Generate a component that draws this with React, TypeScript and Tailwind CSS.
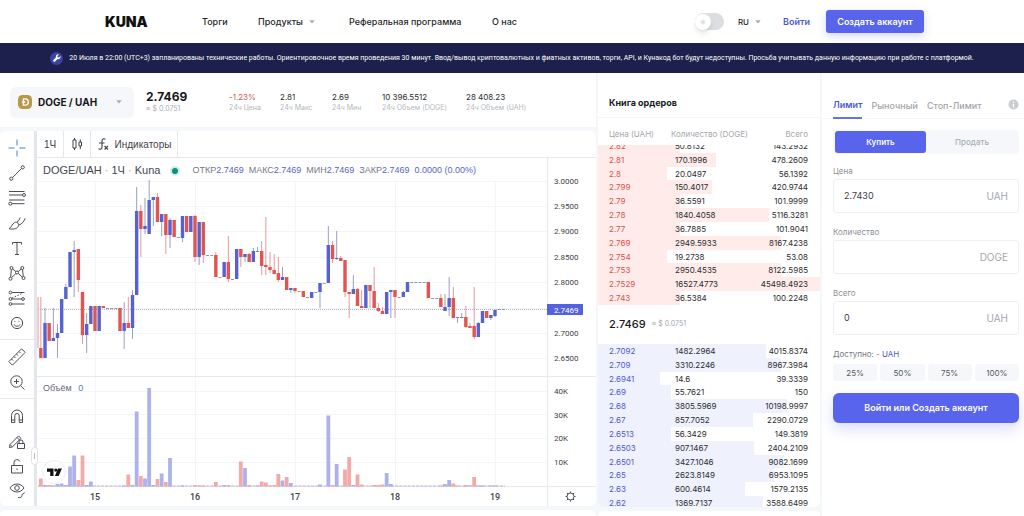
import React, { useState } from 'react';

type Candle = [number, 'u' | 'd', number, number, number, number];

// [hour index, direction, high, body top, body bottom, low] in chart units
const candles: Candle[] = [
  [-13, 'd', 297, 348, 358, 358], [-12, 'u', 308, 323, 358, 358], [-11, 'd', 323, 323, 341, 341],
  [-10, 'u', 308, 338, 341, 341], [-9, 'u', 324, 333, 338, 358], [-8, 'u', 299, 299, 333, 333],
  [-7, 'u', 284, 287, 299, 299], [-6, 'u', 252, 252, 287, 287], [-5, 'u', 241, 250, 252, 297],
  [-4, 'd', 249, 249, 280, 292], [-3, 'd', 292, 292, 335, 344], [-2, 'u', 313, 324, 335, 353],
  [-1, 'u', 306, 306, 324, 324], [0, 'd', 306, 306, 331, 331], [1, 'u', 306, 306, 331, 331],
  [2, 'd', 306, 306, 308, 308], [6, 'd', 308, 308, 331, 331], [7, 'u', 302, 323, 331, 349],
  [8, 'd', 297, 323, 328, 328], [9, 'u', 290, 295, 328, 339], [10, 'u', 187, 211, 295, 295],
  [11, 'd', 205, 211, 229, 257], [12, 'u', 198, 226, 229, 234], [13, 'u', 180, 200, 234, 234],
  [14, 'u', 197, 197, 200, 226], [15, 'd', 193, 197, 222, 222], [16, 'u', 214, 214, 222, 236],
  [17, 'd', 214, 214, 235, 254], [18, 'u', 218, 220, 235, 248], [19, 'd', 220, 220, 237, 237],
  [21, 'u', 216, 216, 238, 242], [22, 'd', 216, 216, 232, 232], [23, 'u', 216, 216, 232, 232],
  [24, 'd', 215, 216, 257, 262], [25, 'u', 222, 222, 257, 265], [26, 'd', 222, 222, 255, 263],
  [29, 'd', 252, 255, 277, 277], [31, 'u', 262, 262, 277, 277], [32, 'd', 236, 262, 279, 282],
  [34, 'u', 249, 249, 279, 279], [35, 'd', 249, 249, 257, 267], [36, 'u', 254, 254, 257, 262],
  [37, 'd', 253, 254, 262, 262], [38, 'u', 248, 251, 262, 262], [39, 'u', 247, 251, 251, 252],
  [40, 'd', 241, 251, 266, 275], [41, 'd', 217, 265, 267, 275], [42, 'd', 252, 267, 270, 273],
  [43, 'd', 254, 270, 274, 274], [44, 'd', 257, 273, 280, 282], [45, 'u', 267, 277, 280, 280],
  [46, 'd', 277, 277, 290, 290], [47, 'u', 288, 288, 290, 293], [48, 'd', 288, 288, 291, 293],
  [50, 'd', 291, 291, 297, 297], [52, 'u', 292, 292, 298, 298], [54, 'u', 283, 283, 292, 308],
  [56, 'u', 226, 245, 283, 283], [57, 'd', 241, 245, 259, 263], [58, 'u', 231, 258, 259, 260],
  [59, 'd', 256, 258, 261, 261], [60, 'd', 260, 260, 292, 297], [61, 'd', 292, 292, 294, 318],
  [62, 'u', 275, 289, 294, 294], [63, 'd', 288, 289, 306, 306], [64, 'd', 290, 306, 308, 308],
  [65, 'u', 285, 285, 308, 308], [66, 'd', 285, 285, 291, 308], [67, 'd', 267, 291, 308, 308],
  [68, 'd', 303, 308, 311, 312], [69, 'd', 307, 311, 314, 314], [70, 'u', 292, 292, 314, 314],
  [71, 'u', 290, 290, 292, 318], [72, 'd', 290, 290, 297, 318], [74, 'u', 291, 292, 297, 297],
  [75, 'u', 282, 282, 292, 292], [80, 'd', 282, 282, 298, 298], [83, 'd', 294, 298, 307, 307],
  [84, 'u', 294, 307, 311, 311], [85, 'u', 277, 298, 307, 316], [86, 'd', 287, 298, 318, 318],
  [87, 'u', 317, 317, 317, 323], [88, 'u', 313, 317, 317, 318], [89, 'd', 306, 317, 327, 328],
  [90, 'd', 323, 326, 328, 328], [91, 'd', 287, 326, 337, 339], [92, 'u', 322, 323, 337, 337],
  [93, 'u', 311, 311, 323, 323], [94, 'd', 311, 311, 318, 318], [95, 'u', 315, 315, 318, 320],
  [96, 'u', 309, 310, 316, 317],
];

const flats: [number, number][] = [
  [3, 308], [4, 308], [5, 308], [20, 237], [27, 255], [28, 255], [30, 277], [33, 279], [39, 251], [49, 291],
  [51, 297], [53, 292], [55, 283], [73, 297], [76, 282], [77, 282], [78, 282], [79, 282], [81, 298], [82, 298],
  [87, 317], [88, 317], [97, 309], [98, 309],
];

const volumes: [number, 'u' | 'd', number][] = [
  [-13, 'd', 8], [-12, 'u', 1.5], [-11, 'd', 1.5], [-10, 'u', 1], [-9, 'u', 2.5], [-8, 'u', 3], [-7, 'u', 1.5],
  [-6, 'u', 20], [-5, 'u', 31], [-4, 'd', 6.5], [-3, 'd', 31], [-2, 'u', 1.5], [-1, 'u', 5], [7, 'u', 1],
  [8, 'd', 12], [9, 'u', 1.5], [10, 'u', 75], [11, 'd', 10.5], [12, 'u', 8], [13, 'u', 98.5], [14, 'u', 1.5],
  [15, 'd', 7.5], [16, 'u', 13], [17, 'd', 4.5], [18, 'u', 28.5], [21, 'u', 1], [24, 'd', 1.5], [25, 'd', 1],
  [26, 'd', 1], [29, 'd', 4.5], [31, 'u', 1.5], [32, 'd', 1.5], [35, 'd', 25], [36, 'u', 18.5], [37, 'd', 1.5],
  [39, 'u', 1], [40, 'd', 5], [41, 'd', 4], [42, 'd', 1], [43, 'd', 1.5], [44, 'd', 12.5], [45, 'u', 6],
  [46, 'd', 9.5], [47, 'u', 3.5], [54, 'u', 2], [56, 'u', 71], [57, 'd', 1.5], [58, 'u', 22.5], [60, 'd', 17],
  [61, 'd', 29.5], [62, 'u', 1.5], [63, 'd', 12], [64, 'd', 2], [67, 'd', 1.5], [68, 'd', 1.5], [69, 'd', 2],
  [70, 'u', 13.5], [71, 'u', 2.5], [83, 'd', 1], [84, 'u', 2.5], [85, 'u', 6.5], [86, 'd', 3], [87, 'd', 1],
  [89, 'd', 1.5], [90, 'u', 1], [91, 'd', 9.5], [92, 'u', 1], [93, 'u', 1], [95, 'u', 1], [96, 'u', 1],
];

const prices: [string, number][] = [
  ['3.0000', 181], ['2.9500', 206], ['2.9000', 231], ['2.8500', 257], ['2.8000', 282], ['2.7000', 333], ['2.6500', 358],
];

const hourX = (i: number) => 95 + (i * 100) / 24;

type Order = [string, string, string, number];

const asks: Order[] = [
  ['2.82', '50.8132', '143.2932', 37], ['2.81', '170.1996', '478.2609', 53], ['2.8', '20.0497', '56.1392', 31],
  ['2.799', '150.4017', '420.9744', 51.5], ['2.79', '36.5591', '101.9999', 37], ['2.78', '1840.4058', '5116.3281', 77],
  ['2.77', '36.7885', '101.9041', 37], ['2.769', '2949.5933', '8167.4238', 82], ['2.754', '19.2738', '53.08', 31],
  ['2.753', '2950.4535', '8122.5985', 82], ['2.7529', '16527.4773', '45498.4923', 100], ['2.743', '36.5384', '100.2248', 37],
];

const bids: Order[] = [
  ['2.7092', '1482.2964', '4015.8374', 75.5], ['2.709', '3310.2246', '8967.3984', 82], ['2.6941', '14.6', '39.3339', 28],
  ['2.69', '55.7621', '150', 33], ['2.68', '3805.5969', '10198.9997', 85], ['2.67', '857.7052', '2290.0729', 69.5],
  ['2.6513', '56.3429', '149.3819', 33], ['2.6503', '907.1467', '2404.2109', 70], ['2.6501', '3427.1046', '9082.1699', 83.5],
  ['2.65', '2623.8149', '6953.1095', 79], ['2.63', '600.4614', '1579.2135', 66], ['2.62', '1369.7137', '3588.6499', 74],
];

function Caret() {
  return (
    <svg viewBox="0 0 6 4" className="h-1 w-1.5 shrink-0" aria-hidden="true">
      <path d="M0.3 0.3h5.4L3 3.6z" fill="#a9adb1" />
    </svg>
  );
}

function Header() {
  const [dark, setDark] = useState(false);
  return (
    <header className="flex h-[43px] items-center justify-between bg-white pl-[105px] pr-[100px] text-[9px] font-medium text-[#26282c]">
      <div className="flex items-center">
        <a href="#" className="w-[97px] text-[14px] font-black text-[#111]">KUNA</a>
        <nav className="flex items-center">
          <a href="#" className="w-14">Торги</a>
          <a href="#" className="flex w-[91px] items-center gap-1.5">Продукты <Caret /></a>
          <a href="#" className="w-[143px]">Реферальная программа</a>
          <a href="#">О нас</a>
        </nav>
      </div>
      <div className="flex items-center">
        <label className="relative mr-3.5 flex h-[17px] w-[29px] cursor-pointer items-center rounded-full bg-[#dcdde0]">
          <input type="checkbox" aria-label="Тема" className="peer sr-only" checked={dark} onChange={(e) => setDark(e.target.checked)} />
          <span className="flex size-4 items-center justify-center rounded-full bg-white shadow-md peer-checked:translate-x-3">
            <svg viewBox="0 0 10 10" className="size-2.5" aria-hidden="true">
              <circle cx="5" cy="5" r="1.5" fill="#d3d4d6" />
              <path d="M5 1.5v7M1.5 5h7M2.8 2.8l4.4 4.4M7.2 2.8L2.8 7.2" stroke="#dddee0" strokeWidth="0.6" />
            </svg>
          </span>
        </label>
        <button type="button" className="mr-[22px] flex items-center gap-1.5 text-[8px]">RU <Caret /></button>
        <a href="#" className="mr-4 font-semibold text-[#4c57d8]">Войти</a>
        <a href="#" className="flex h-[23px] w-[98px] items-center justify-center whitespace-nowrap rounded-[3px] bg-[#5764eb] font-semibold text-white shadow-[0_3px_8px_rgba(87,100,235,0.25)]">
          Создать аккаунт
        </a>
      </div>
    </header>
  );
}

function Banner() {
  return (
    <div className="flex h-[30px] items-center justify-center gap-1.5 overflow-hidden bg-[#1d204d] text-white">
      <span className="flex size-[13px] shrink-0 items-center justify-center rounded-full bg-[#3c43a6]">
        <svg viewBox="0 0 24 24" className="size-2" aria-hidden="true">
          <path d="M22.5 6.2l-4.3 4.3-4-.8-.8-4L17.700 1.400A7.200 7.200 0 0 0 8.800 10.400L1.700 17.500a3.300 3.300 0 0 0 4.700 4.700l7.100-7.100a7.200 7.200 0 0 0 9-8.900z" fill="#fff" />
        </svg>
      </span>
      <p className="whitespace-nowrap font-[Roboto,sans-serif] text-[7px]">
        20 Июля в 22:00 (UTC+3) запланированы технические работы. Ориентировочное время проведения 30 минут. Ввод/вывод криптовалютных и фиатных активов, торги, API, и Кунакод бот будут недоступны. Просьба учитывать данную информацию при работе с платформой.
      </p>
    </div>
  );
}

function Stat({ value, label, width, red }: { value: string; label: string; width: string; red?: boolean }) {
  return (
    <div className={width}>
      <dd className={red ? 'text-[8px] leading-[11px] text-[#e0524f]' : 'text-[8px] leading-[11px] text-[#2b2d31]'}>{value}</dd>
      <dt className="text-[7px] leading-[10px] text-[#b4b8bd]">{label}</dt>
    </div>
  );
}

function Ticker() {
  return (
    <section className="flex h-[54px] items-center bg-white pl-2.5 pt-1">
      <button type="button" className="flex h-[31px] w-[124px] items-center rounded-md bg-[#f5f7fb] px-2">
        <svg viewBox="0 0 14 14" className="mr-1.5 size-3.5" aria-hidden="true">
          <rect width="14" height="14" rx="4.500" fill="#b79a47" />
          <path d="M5.400 3.800h1.600c2.200 0 3.300 1.300 3.300 3.200S9.200 10.200 7 10.200H5.400zM4 7h3.300" fill="none" stroke="#fff" strokeWidth="1.300" />
        </svg>
        <span className="text-[10px] font-bold text-[#16181c]">DOGE / UAH</span>
        <span className="ml-auto mr-1"><Caret /></span>
      </button>
      <div className="ml-3 w-[83px] leading-none">
        <div className="text-[12px] font-bold leading-[12px] text-[#16181c]">2.7469</div>
        <div className="text-[7px] leading-[11px] text-[#a9adb2]">≈ $ 0.0751</div>
      </div>
      <dl className="flex whitespace-nowrap">
        <Stat width="w-[51px]" value="-1.23%" label="24ч Цена" red />
        <Stat width="w-[52px]" value="2.81" label="24ч Макс" />
        <Stat width="w-[50px]" value="2.69" label="24ч Мин" />
        <Stat width="w-[84px]" value="10 396.5512" label="24ч Объем (DOGE)" />
        <Stat width="w-[60px]" value="28 408.23" label="24ч Объем (UAH)" />
      </dl>
    </section>
  );
}

const tools: [string, React.ReactNode][] = [
  ['Перекрестие', <path key="p" d="M1.500 10h6M12.500 10h6M10 1.500v6M10 12.500v6" stroke="#4a7fd4" />],
  ['Линия тренда', <><circle cx="15.700" cy="4.300" r="1.600" /><circle cx="4.300" cy="15.700" r="1.600" /><path d="M14.500 5.500l-9 9" /></>],
  ['Коррекция Фибоначчи', <><path d="M2 3.500h15.500M2 7h13.500M2 12h15.500M5 15.700h12.500" /><circle cx="17" cy="7" r="1.500" /><circle cx="3.300" cy="15.700" r="1.500" /></>],
  ['Кисть', <path key="p" d="M2 15.700c4 .8 8 .5 9.300-2.500 1.200-2.700-1.400-4.800-3.800-3.600C4.800 11 5 14.300 2 15.700zM12 12c3-.8 5-3.700 6.200-6.700M10.500 9.500c-.5-2.500 3-2.500 2.500-5" />],
  ['Текст', <path key="p" d="M5.500 6.500v-2h9v2M10 4.500v12M8 16.500h4" />],
  ['Паттерны', <><circle cx="4.500" cy="5" r="1.500" /><circle cx="15.300" cy="5" r="1.500" /><circle cx="10" cy="9.500" r="1.500" /><circle cx="3.500" cy="15.700" r="1.500" /><circle cx="16.500" cy="15" r="1.500" /><path d="M4.300 6.500l-.6 7.700M5.700 6l3.200 2.600M11.200 8.600L14.200 6M15.500 6.500l.8 7M11.300 10.500l4 3.600M4.700 14.700l4.200-4.300" /></>],
  ['Прогноз', <><circle cx="3.500" cy="4.500" r="1.400" /><circle cx="3.500" cy="11" r="1.400" /><circle cx="16" cy="11" r="1.400" /><circle cx="3.500" cy="16" r="1.400" /><path d="M5 4.500h12.500M5 11h9.500M5 16h12.500" /><path d="M5 10l11-5" strokeDasharray="1.500 1.500" /></>],
  ['Значки', <><circle cx="10" cy="10" r="5.600" /><path d="M7 11.500c1.200 2.300 4.800 2.300 6 0M8 8v.8M12 8v.8" /></>],
  ['Линейка', <path key="p" d="M1.800 14.600L14.600 1.800l3.600 3.600L5.400 18.200zM4.500 12l1.500 1.500M7 9.500l1.500 1.500M9.500 7l1.500 1.500M12 4.500l1.500 1.500" />],
  ['Увеличить', <><circle cx="9.500" cy="9.500" r="5.700" /><path d="M13.700 13.700l3.800 3.800M9.500 7v5M7 9.500h5" /></>],
  ['Магнит', <path key="p" d="M4.500 16.500V9.500a5.500 5.500 0 0 1 11 0v7h-3.300V9.700a2.200 2.200 0 0 0-4.400 0v6.800zM4.500 14h3.300M12.200 14h3.300" />],
  ['Режим рисования', <><path d="M3 13.500l-.6 3 3-.6 8.600-8.600-2.400-2.400zM10 6.500l2.400 2.400M3 13.500l2.400 2.400" /><path d="M10.500 12.500h7v5h-7zM12 12.500v-1.500a2 2 0 0 1 4 0v1.500" fill="#fff" /></>],
  ['Заблокировать', <><path d="M4.500 9.500h11v7.500h-11zM7 9.500V6.500a3 3 0 0 1 5.800-1" /><path d="M10 12.500v1.500" /></>],
  ['Скрыть', <><path d="M3 7c3.400-5.300 10.600-5.300 14 0-3.400 5.300-10.600 5.300-14 0z" /><circle cx="10" cy="7" r="2.300" /><path d="M11 16.500c2.500.3 4-.3 4.200-2.200M14.500 14l3.200-2.300" /></>],
];

function Tool({ index }: { index: number }) {
  const [label, art] = tools[index];
  return (
    <button type="button" aria-label={label} className="flex h-[25px] w-full items-center justify-center">
      <svg viewBox="0 0 20 20" className="size-5" fill="none" stroke="#4a4d55" strokeWidth="1" aria-hidden="true">{art}</svg>
    </button>
  );
}

function ChartPlot() {
  const color = { u: '#5562d2', d: '#e0554f' };
  const wick = { u: '#9aa0c8', d: '#e59a98' };
  const vol = { u: '#adb2ea', d: '#f2aaa8' };
  return (
    <svg viewBox="37 158 559 348" className="block h-auto w-full" role="img" aria-label="График DOGE/UAH">
      <g stroke="#f3f5f8" strokeWidth="1">
        {[95, 195, 295, 395, 495].map((x) => <path key={x} d={`M${x + 0.5} 181V486`} />)}
        {[181, 206, 231, 257, 282, 308, 333, 358, 391, 414, 438, 462].map((y) => <path key={y} d={`M38 ${y + 0.5}H547`} />)}
      </g>
      <path d="M37 376.500H596M547.500 158V506M37 486.500H596" stroke="#e6e9ee" fill="none" />
      <path d="M38 309.500H547" stroke="#b4b6c4" strokeWidth="1" strokeDasharray="1 1" />
      <path d="M38 297V348" stroke="#e59a98" />
      {candles.map(([i, dir, high, top, bottom, low]) => (
        <g key={i}>
          <rect x={hourX(i) - 0.5} y={high} width="1" height={low - high} fill={wick[dir]} />
          <rect x={hourX(i) - 1.7} y={top} width="3.4" height={Math.max(bottom - top, 0.8)} fill={color[dir]} />
        </g>
      ))}
      {flats.map(([i, y]) => <rect key={i} x={hourX(i) - 1.5} y={y} width="3" height="0.8" fill="#7c80a0" />)}
      <path d="M38 486H505" stroke="#b9b7d4" strokeWidth="1" strokeDasharray="3.200 1" />
      {volumes.map(([i, dir, h]) => <rect key={i} x={hourX(i) - 1.9} y={486.5 - h} width="3.8" height={h} fill={vol[dir]} />)}
      <g fontFamily="Roboto, sans-serif" fontSize="8" fill="#3f424c">
        {prices.map(([label, y]) => <text key={label} x="554" y={y + 3}>{label}</text>)}
        {[['40K', 391], ['30K', 415], ['20K', 438], ['10K', 462]].map(([label, y]) => (
          <text key={label} x="554" y={Number(y) + 3}>{label}</text>
        ))}
      </g>
      <rect x="547" y="304" width="36" height="11" fill="#5562e0" />
      <text x="554" y="312.5" fontFamily="Roboto, sans-serif" fontSize="8" fill="#fff">2.7469</text>
      <g fontFamily="Roboto, sans-serif" fontSize="9" fontWeight="500" fill="#3f424c" textAnchor="middle">
        {[15, 16, 17, 18, 19].map((d, k) => <text key={d} x={95 + k * 100} y="499.500">{d}</text>)}
      </g>
      <g transform="translate(570.5 496.5)" fill="none" stroke="#4a4d55">
        <circle r="3.500" />
        <path d="M0-3.500V-5M0 3.500V5M-3.500 0H-5M3.500 0H5M-2.500-2.500L-3.600-3.600M2.500 2.500L3.600 3.600M2.500-2.500L3.600-3.600M-2.500 2.500L-3.600 3.600" />
      </g>
      <circle cx="54" cy="472" r="11.500" fill="#fff" stroke="#eceef2" />
      <path d="M47 468.500h6.500v7.500h-3.300v-4.200H47zM58 468.500h3.900l-3.200 7.500h-3.800z" fill="#111" />
      <circle cx="55.800" cy="470.100" r="1.600" fill="#111" />
    </svg>
  );
}

function Quote({ name, value }: { name: string; value: string }) {
  return <span>{name}<span className="text-[#5a64c4]">{value}</span></span>;
}

function Chart() {
  return (
    <section className="flex rounded-md bg-white font-['Liberation_Sans',Arial,sans-serif]">
      <div className="relative flex w-[34px] shrink-0 flex-col pt-1">
        {[0, 1, 2, 3, 4, 5, 6, 7].map((i) => <Tool key={i} index={i} />)}
        <hr className="my-1 border-[#e3e6ec]" />
        {[8, 9].map((i) => <Tool key={i} index={i} />)}
        <hr className="my-1 border-[#e3e6ec]" />
        {[10, 11, 12, 13].map((i) => <Tool key={i} index={i} />)}
        <button type="button" aria-label="Скрыть панель" className="absolute -right-1 bottom-[41px] flex h-[18px] w-[7px] items-center justify-center rounded-sm border border-[#dfe2e8] bg-white">
          <span className="h-1.5 w-px bg-[#b4b8c2]" />
        </button>
      </div>
      <div className="min-w-0 flex-1 border-l-[3px] border-[#e3e7eb]">
        <div className="flex h-[27px] items-stretch border-b border-[#e3e6ec] text-[10px] text-[#3f424c]">
          <button type="button" className="w-[27px] border-r border-[#e3e6ec]">1Ч</button>
          <button type="button" aria-label="Свечи" className="flex w-[27px] items-center justify-center border-r border-[#e3e6ec]">
            <svg viewBox="0 0 12 14" className="h-3.5 w-3" fill="none" stroke="#3f424c" aria-hidden="true">
              <path d="M2 3h3v8H2zM3.500 1v2M3.500 11v2M8 5h2.500v4H8zM9.300 2.500V5M9.300 9v3" />
            </svg>
          </button>
          <button type="button" className="flex w-[87px] items-center justify-center gap-1.5 border-r border-[#e3e6ec]">
            <svg viewBox="0 0 12 14" className="h-3.5 w-3" fill="none" stroke="#3f424c" strokeWidth="1.100" aria-hidden="true">
              <path d="M8.500 2.300C6.500 1 5 2 5 4v6c0 2-1.500 2.700-3.500 1.800M2 6h5.500M7.500 9l3.500 3.500M11 9l-3.500 3.500" />
            </svg>
            Индикаторы
          </button>
        </div>
        <div className="relative">
          <ChartPlot />
          <div className="absolute left-1.5 top-1.5 flex items-center whitespace-nowrap text-[11px] leading-[13px] text-[#43464f]">
            <h1 className="mr-2.5">DOGE/UAH <span className="text-[#a5a8b2]">·</span> 1Ч <span className="text-[#a5a8b2]">·</span> Kuna</h1>
            <span className="mr-3 flex size-2.5 items-center justify-center rounded-full bg-[#c9f0ea]"><span className="size-1.5 rounded-full bg-[#11917c]" /></span>
            <p className="flex gap-[5px] text-[9px] text-[#767983]">
              <Quote name="ОТКР" value="2.7469" />
              <Quote name="МАКС" value="2.7469" />
              <Quote name="МИН" value="2.7469" />
              <Quote name="ЗАКР" value="2.7469" />
              <span className="text-[#5a64c4]">0.0000 (0.00%)</span>
            </p>
          </div>
          <div className="absolute left-1.5 top-[224px] text-[9px] leading-3 text-[#666974]">Объём <span className="ml-1 text-[#6a74c8]">0</span></div>
        </div>
      </div>
    </section>
  );
}

function Orders({ rows, side }: { rows: Order[]; side: 'ask' | 'bid' }) {
  const tint = side === 'ask' ? '#ffebea' : '#eff1fd';
  return (
    <table
      aria-label={side === 'ask' ? 'Заявки на продажу' : 'Заявки на покупку'}
      className="h-[166px] w-full shrink-0 table-fixed border-collapse text-[8px] leading-none text-[#2b2d31]"
    >
      <tbody>
        {rows.map(([price, amount, total, depth]) => (
          <tr key={price} style={{ background: `linear-gradient(to right, ${tint} ${depth}%, transparent ${depth}%)` }}>
            <td className={side === 'ask' ? 'w-[77px] p-0 pl-[11px] text-[#d9534f]' : 'w-[77px] p-0 pl-[11px] text-[#4f59cf]'}>{price}</td>
            <td className="p-0">{amount}</td>
            <td className="p-0 pr-3 text-right">{total}</td>
          </tr>
        ))}
      </tbody>
    </table>
  );
}

function OrderBook() {
  return (
    <section className="flex flex-col rounded-b-md bg-white">
      <h2 className="flex h-[45px] items-end border-b border-[#f3f5f8] pb-2 pl-[11px] text-[9px] font-bold leading-[12px] text-[#16181c]">Книга ордеров</h2>
      <div className="flex h-[27px] items-center whitespace-nowrap pl-[11px] pr-3 pt-1 text-[8px] text-[#a4a8ad]">
        <span className="w-[62px]">Цена (UAH)</span>
        <span>Количество (DOGE)</span>
        <span className="ml-auto">Всего</span>
      </div>
      <div className="flex h-[160px] flex-col justify-end overflow-hidden"><Orders rows={asks} side="ask" /></div>
      <div className="flex h-[39px] items-center gap-1.5 pl-[11px]">
        <span className="text-[11px] font-medium text-[#16181c]">2.7469</span>
        <span className="text-[7px] text-[#a4a8ad]">≈ $ 0.0751</span>
      </div>
      <div className="h-[163px] overflow-hidden rounded-b-md"><Orders rows={bids} side="bid" /></div>
    </section>
  );
}

function Field({ id, label, value, unit }: { id: string; label: string; value: string; unit: string }) {
  return (
    <div>
      <label htmlFor={id} className="block h-[13px] text-[8px] leading-[11px] text-[#8d9197]">{label}</label>
      <div className="flex h-[34px] items-center rounded-[3px] border border-[#edeff2] px-2.5">
        <input id={id} defaultValue={value} className="w-full min-w-0 text-[9px] text-[#3a3d42] outline-none" />
        <span className="text-[10px] text-[#a4a8ad]">{unit}</span>
      </div>
    </div>
  );
}

function TradeForm() {
  return (
    <form className="flex flex-col bg-white pb-4" onSubmit={(e) => e.preventDefault()}>
      <div className="flex h-[46px] items-end gap-[9px] whitespace-nowrap border-b border-[#f3f5f8] pl-[11px] pr-[5px] text-[9px] font-medium leading-[12px] text-[#a1a5aa]">
        <button type="button" className="-mb-px h-[22px] border-b-2 border-[#6a74d8] pb-1 font-semibold text-[#4c57d8]">Лимит</button>
        <button type="button" className="h-[21px] pb-1">Рыночный</button>
        <button type="button" className="h-[21px] pb-1">Стоп-Лимит</button>
        <svg viewBox="0 0 12 12" className="mb-2 ml-auto size-[11px]" aria-hidden="true">
          <circle cx="6" cy="6" r="5.500" fill="#c9ccd0" />
          <path d="M6 2.800v1.300M6 5.200v4" stroke="#fff" strokeWidth="1.400" />
        </svg>
      </div>
      <div className="flex flex-col pl-[11px] pr-[5px] pt-[11px]">
        <div className="grid h-6 grid-cols-2 rounded bg-[#f5f7fa] p-px text-[8px]">
          <button type="button" className="ml-px rounded-[3px] bg-[#5764eb] font-semibold text-white">Купить</button>
          <button type="button" className="font-medium text-[#a9adb3]">Продать</button>
        </div>
        <div className="mt-3 flex flex-col gap-3.5">
          <Field id="price" label="Цена" value="2.7430" unit="UAH" />
          <Field id="amount" label="Количество" value="" unit="DOGE" />
          <Field id="total" label="Всего" value="0" unit="UAH" />
        </div>
        <p className="mt-3.5 text-[8px] leading-[11px] text-[#73777d]">Доступно: - <span className="text-[#4c57d8]">UAH</span></p>
        <div className="mt-1 grid h-[17px] grid-cols-4 gap-[3px] text-[8px] text-[#55585e]">
          {['25%', '50%', '75%', '100%'].map((p) => <button key={p} type="button" className="rounded-[3px] bg-[#f5f7fa]">{p}</button>)}
        </div>
        <button type="submit" className="mt-3 h-[30px] rounded-md bg-[#5764eb] text-[9px] font-semibold text-white shadow-[0_6px_14px_rgba(87,100,235,0.22)]">
          Войти или Создать аккаунт
        </button>
      </div>
    </form>
  );
}

export default function App() {
  return (
    <div className="flex min-h-screen flex-col overflow-hidden bg-[#f5f8fb] font-['Inter',sans-serif]">
      <Header />
      <Banner />
      <main className="grid flex-1 grid-cols-[minmax(0,1fr)_222px_202px] gap-x-0.5">
        <div className="flex flex-col">
          <Ticker />
          <div className="mt-1"><Chart /></div>
          <div className="mt-1 min-h-1 flex-1 rounded-t-md bg-white" />
        </div>
        <div className="flex flex-col">
          <OrderBook />
          <div className="mt-1 min-h-1 flex-1 rounded-t-md bg-white" />
        </div>
        <TradeForm />
      </main>
    </div>
  );
}
